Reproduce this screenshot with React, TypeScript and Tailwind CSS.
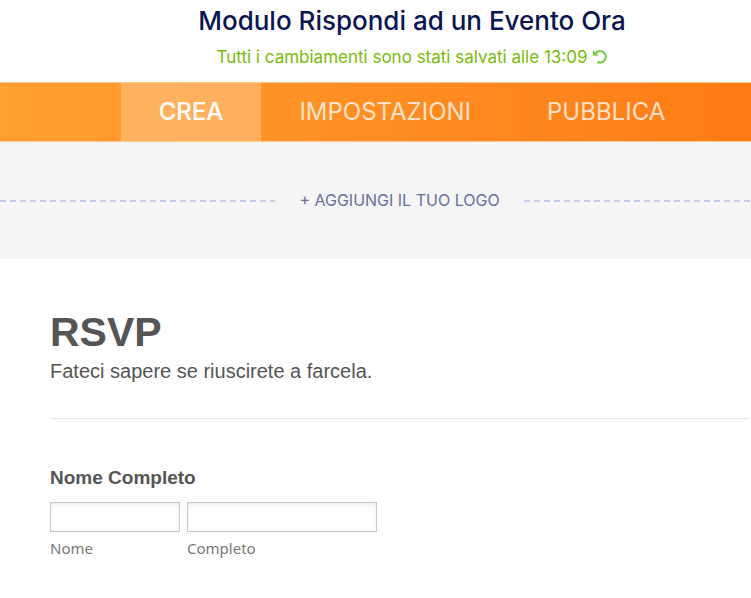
import { useState } from 'react';

const tabs = ['CREA', 'IMPOSTAZIONI', 'PUBBLICA'];

function UndoIcon() {
  return (
    <svg className="h-4 w-4" viewBox="0 0 16 16" fill="none" aria-hidden="true">
      <path d="M3.6 4.2A5.7 5.7 0 1 1 5.2 12.8" stroke="currentColor" strokeWidth="2.3" />
      <path d="M1 1.2V6.8h5.8z" fill="currentColor" />
    </svg>
  );
}

function DashedLine() {
  return (
    <div className="h-0.5 flex-1 bg-[repeating-linear-gradient(to_right,#c8ccee_0_6px,transparent_6px_10px)]" />
  );
}

function Header() {
  return (
    <header className="flex h-[82px] flex-col items-center gap-2 bg-white pt-1 pl-[73px] font-['Inter',sans-serif]">
      <h1 className="text-[26px] leading-[34px] font-medium whitespace-nowrap text-[#0a1551]">
        Modulo Rispondi ad un Evento Ora
      </h1>
      <div className="flex items-center gap-1 text-[#78bb07]">
        <p className="text-[17px] leading-[22px] whitespace-nowrap">Tutti i cambiamenti sono stati salvati alle 13:09</p>
        <button type="button" aria-label="Annulla" className="text-[#78d04a]">
          <UndoIcon />
        </button>
      </div>
    </header>
  );
}

export default function App() {
  const [activeTab, setActiveTab] = useState('CREA');

  return (
    <div className="min-h-screen overflow-x-hidden bg-white">
      <Header />

      <nav className="flex h-[60px] justify-center border-y border-[#ffc48a] bg-linear-to-r from-[#ffa02f] to-[#ff7b14] bg-origin-border pl-[73px] font-['Inter',sans-serif]">
        {tabs.map((tab) => (
          <button
            key={tab}
            type="button"
            onClick={() => setActiveTab(tab)}
            className={`px-[38px] text-2xl ${activeTab === tab ? 'bg-white/25 font-medium text-white' : 'text-white/75'}`}
          >
            {tab}
          </button>
        ))}
      </nav>

      <section className="bg-[#f5f5f5] py-12">
        <div className="-mr-12 flex items-center gap-6 font-['Inter',sans-serif]">
          <DashedLine />
          <button type="button" className="text-base leading-[21px] whitespace-nowrap text-[#6a6f9c]">
            + AGGIUNGI IL TUO LOGO
          </button>
          <DashedLine />
        </div>
      </section>

      <main className="pl-[50px] font-['Liberation_Sans',Arial,sans-serif] text-[#555]">
        <div className="mr-px border-b border-[#e5e5e5] pt-12 pb-[33px]">
          <h2 className="text-[41px] leading-[50px] font-bold">RSVP</h2>
          <p className="text-xl leading-7">Fateci sapere se riuscirete a farcela.</p>
        </div>

        <fieldset className="mt-[47px]">
          <legend className="text-[19px] leading-6 font-bold">Nome Completo</legend>
          <div className="mt-3 flex gap-[7px] font-['Noto_Sans',sans-serif] text-[15px] leading-5 text-[#777]">
            <div className="flex w-[130px] flex-col gap-1.5">
              <input id="nome" type="text" className="h-[30px] border border-[#c8c8c8] bg-white px-1 shadow-[inset_0_2px_4px_rgba(0,0,0,0.08)]" />
              <label htmlFor="nome">Nome</label>
            </div>
            <div className="flex w-[190px] flex-col gap-1.5">
              <input id="completo" type="text" className="h-[30px] border border-[#c8c8c8] bg-white px-1 shadow-[inset_0_2px_4px_rgba(0,0,0,0.08)]" />
              <label htmlFor="completo">Completo</label>
            </div>
          </div>
        </fieldset>
      </main>
    </div>
  );
}
